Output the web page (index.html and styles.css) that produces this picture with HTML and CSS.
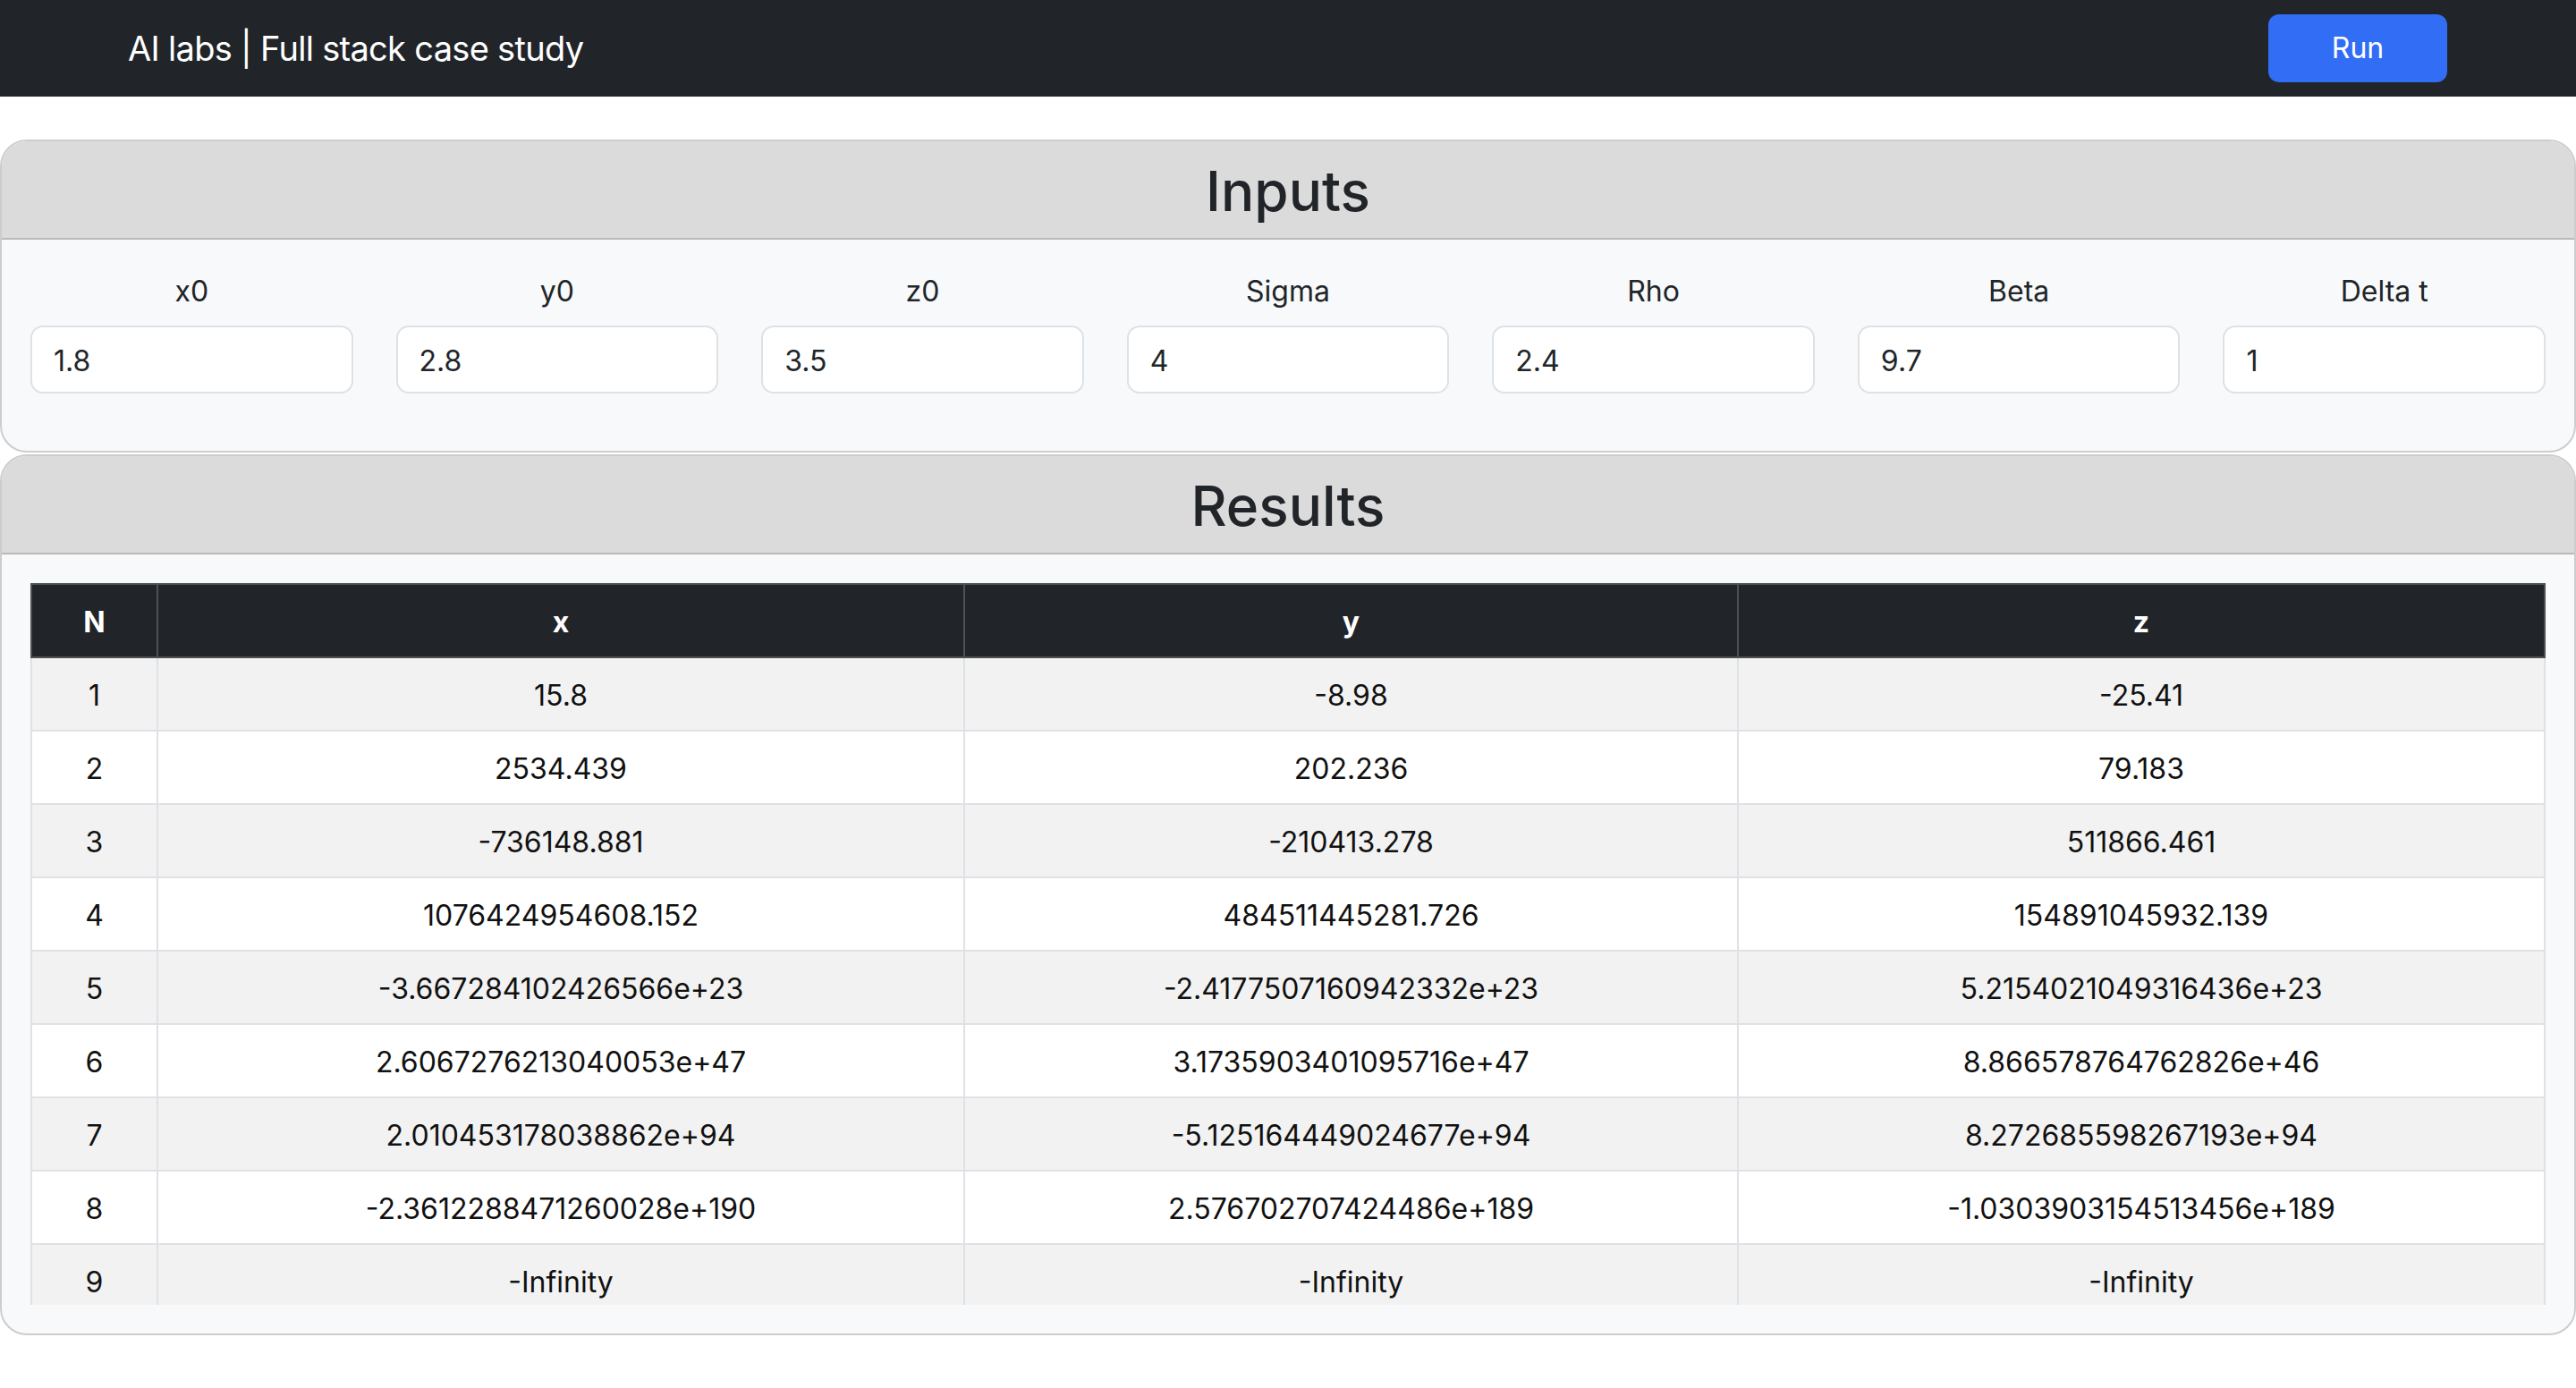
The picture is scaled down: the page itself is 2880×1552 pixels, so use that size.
FILE: index.html
```html
<!DOCTYPE html>
<html lang="en">
<head>
<meta charset="utf-8">
<title>AI labs | Full stack case study</title>
<link rel="stylesheet" href="styles.css">
</head>
<body>
<nav class="navbar">
  <span class="brand">AI labs | Full stack case study</span>
  <button class="btn-run" type="button">Run</button>
</nav>
<main class="main">
  <section class="card">
    <h2 class="card-header">Inputs</h2>
    <div class="card-body">
      <div class="inputs-grid">
        <div class="field"><label class="field-label">x0</label><input class="field-input" type="text" value="1.8"></div>
        <div class="field"><label class="field-label">y0</label><input class="field-input" type="text" value="2.8"></div>
        <div class="field"><label class="field-label">z0</label><input class="field-input" type="text" value="3.5"></div>
        <div class="field"><label class="field-label">Sigma</label><input class="field-input" type="text" value="4"></div>
        <div class="field"><label class="field-label">Rho</label><input class="field-input" type="text" value="2.4"></div>
        <div class="field"><label class="field-label">Beta</label><input class="field-input" type="text" value="9.7"></div>
        <div class="field"><label class="field-label">Delta t</label><input class="field-input" type="text" value="1"></div>
      </div>
    </div>
  </section>
  <section class="card card-results">
    <h2 class="card-header">Results</h2>
    <div class="card-body">
      <div class="table-wrap">
        <table class="results">
          <thead>
            <tr><th class="col-n">N</th><th class="col-x">x</th><th class="col-y">y</th><th class="col-z">z</th></tr>
          </thead>
          <tbody>
            <tr><td>1</td><td>15.8</td><td>-8.98</td><td>-25.41</td></tr>
            <tr><td>2</td><td>2534.439</td><td>202.236</td><td>79.183</td></tr>
            <tr><td>3</td><td>-736148.881</td><td>-210413.278</td><td>511866.461</td></tr>
            <tr><td>4</td><td>1076424954608.152</td><td>484511445281.726</td><td>154891045932.139</td></tr>
            <tr><td>5</td><td>-3.667284102426566e+23</td><td>-2.4177507160942332e+23</td><td>5.2154021049316436e+23</td></tr>
            <tr><td>6</td><td>2.6067276213040053e+47</td><td>3.1735903401095716e+47</td><td>8.866578764762826e+46</td></tr>
            <tr><td>7</td><td>2.010453178038862e+94</td><td>-5.125164449024677e+94</td><td>8.272685598267193e+94</td></tr>
            <tr><td>8</td><td>-2.3612288471260028e+190</td><td>2.576702707424486e+189</td><td>-1.0303903154513456e+189</td></tr>
            <tr><td>9</td><td>-Infinity</td><td>-Infinity</td><td>-Infinity</td></tr>
          </tbody>
        </table>
      </div>
    </div>
  </section>
</main>
</body>
</html>
```

FILE: styles.css
```css
* { box-sizing: border-box; }

html, body {
  margin: 0;
  padding: 0;
  background: #ffffff;
  font-family: Inter, "Noto Sans", "Liberation Sans", sans-serif;
  color: #212529;
}

.navbar {
  height: 108px;
  background: #212529;
  display: flex;
  align-items: center;
  justify-content: space-between;
  padding: 0 144px 0 143px;
}

.brand {
  color: #ffffff;
  font-size: 38px;
  line-height: 48px;
  letter-spacing: -0.7px;
}

.btn-run {
  width: 200px;
  height: 76px;
  border: 0;
  border-radius: 12px;
  background: #326ef5;
  color: #ffffff;
  font-family: inherit;
  font-size: 32px;
  padding-top: 0;
}

.main {
  margin-top: 48px;
}

.card {
  border: 2px solid #cdcdcd;
  border-radius: 30px;
  background: #f8f9fa;
  overflow: hidden;
}

.card-results {
  margin-top: 2px;
}

.card-header {
  margin: 0;
  padding: 18px 32px 14px;
  background: #dbdbdb;
  border-bottom: 2px solid #b9b9b9;
  text-align: center;
  font-size: 62px;
  line-height: 76px;
  font-weight: 500;
  color: #212529;
}

.card-body {
  padding: 32px;
}

.inputs-grid {
  display: grid;
  grid-template-columns: repeat(7, 1fr);
  column-gap: 48px;
  margin-bottom: 32px;
}

.field {
  display: flex;
  flex-direction: column;
}

.field-label {
  display: block;
  text-align: center;
  font-size: 32px;
  line-height: 48px;
  padding-top: 2px;
  margin-bottom: 14px;
  color: #212529;
}

.field-input {
  width: 100%;
  height: 76px;
  border: 2px solid #dee2e6;
  border-radius: 14px;
  background: #ffffff;
  padding: 3px 24px 0;
  font-family: inherit;
  font-size: 32px;
  color: #212529;
}

.table-wrap {
  height: 807px;
  overflow: hidden;
}

.results {
  width: 100%;
  border-collapse: collapse;
  text-align: center;
  font-size: 32px;
}

.results th,
.results td {
  padding: 18px 16px 14px;
  line-height: 48px;
  border: 2px solid #dee2e6;
}

.results th {
  background: #212529;
  color: #ffffff;
  font-weight: 700;
  border-color: #4d5154;
}

.results td {
  color: #111111;
}

.results tbody tr:nth-child(odd) td {
  background: #f2f2f2;
}

.results tbody tr:nth-child(even) td {
  background: #ffffff;
}

.col-n { width: 141px; }
.col-x { width: 902px; }
.col-y { width: 865px; }
```
